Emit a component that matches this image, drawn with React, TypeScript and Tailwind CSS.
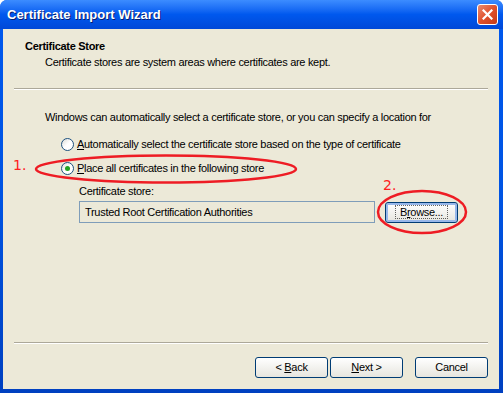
import React from "react";

const font = { fontFamily: '"Liberation Sans", Arial, sans-serif' };

const Radio = ({ checked }: { checked?: boolean }) => (
  <span className="relative inline-block w-[13px] h-[13px] rounded-full border border-[#1c5180] bg-gradient-to-br from-[#dcdcd7] via-white to-white shrink-0">
    {checked && (
      <span className="absolute left-[3px] top-[3px] w-[5px] h-[5px] rounded-full bg-[#21a121]" />
    )}
  </span>
);

const XpButton = ({
  children,
  focused,
  className = "",
}: {
  children: React.ReactNode;
  focused?: boolean;
  className?: string;
}) => (
  <button
    className={`h-[21px] w-[73px] rounded-[3px] border border-[#003c74] bg-gradient-to-b from-white to-[#e6e5de] text-[11px] text-black tracking-[-0.3px] flex items-center justify-center ${
      focused ? "shadow-[inset_0_0_0_2px_#98b8ea]" : ""
    } ${className}`}
    style={font}
  >
    <span>{children}</span>
  </button>
);

export default function App() {
  return (
    <div className="w-[503px] h-[393px] relative" style={font}>
      <div className="w-full h-full flex flex-col rounded-t-[7px] bg-gradient-to-b from-[#0058ee] via-[#0054e3] to-[#0040c0] overflow-hidden">
        {/* title bar */}
        <div className="h-[29px] flex items-center justify-between pl-[7px] pr-[5px] bg-gradient-to-b from-[#3c8cff] via-[#0058ee] to-[#0048d8]">
          <span className="text-white font-bold text-[13px] [text-shadow:1px_1px_0_#0a1e6e]">
            Certificate Import Wizard
          </span>
          <span className="w-[21px] h-[21px] rounded-[3px] border border-white bg-gradient-to-br from-[#e98a6e] via-[#e0502c] to-[#c53a18] flex items-center justify-center">
            <svg width="11" height="11" viewBox="0 0 11 11">
              <path d="M1.5 1.5 L9.5 9.5 M9.5 1.5 L1.5 9.5" stroke="white" strokeWidth="2.2" strokeLinecap="square" />
            </svg>
          </span>
        </div>

        {/* body */}
        <div className="flex-1 mx-[3px] mr-[4px] mb-[4px] bg-[#ece9d8] flex flex-col text-[11px] text-black tracking-[-0.3px]">
          <div className="h-[59px] pt-[11px] pl-[22px]">
            <div className="font-bold leading-[13px]">Certificate Store</div>
            <div className="pl-[20px] pt-[3px] leading-[13px]">
              Certificate stores are system areas where certificates are kept.
            </div>
          </div>
          <div className="mx-[11px] h-[2px] border-t border-[#aca899] border-b border-b-white" />

          <div className="flex-1 flex flex-col pl-[42px] pt-[21px]">
            <div className="leading-[13px]">
              Windows can automatically select a certificate store, or you can specify a location for
            </div>
            <div className="flex items-center gap-[3px] pl-[16px] mt-[13px] h-[14px]">
              <Radio />
              <span>
                <u>A</u>utomatically select the certificate store based on the type of certificate
              </span>
            </div>
            <div className="flex items-center gap-[3px] pl-[16px] mt-[10px] h-[14px]">
              <Radio checked />
              <span>
                <u>P</u>lace all certificates in the following store
              </span>
            </div>
            <div className="pl-[34px] mt-[10px] leading-[13px]">Certificate store:</div>
            <div className="flex items-center pl-[34px] mt-[3px]">
              <div className="w-[296px] h-[22px] border border-[#7f9db9] flex items-center pl-[5px]">
                Trusted Root Certification Authorities
              </div>
              <XpButton focused className="ml-[10px]">
                <span className="px-[4px] border border-dotted border-black/60 leading-[13px]">
                  B<u>r</u>owse...
                </span>
              </XpButton>
            </div>
          </div>

          <div className="mx-[11px] h-[2px] border-t border-[#aca899] border-b border-b-white" />
          <div className="h-[45px] flex items-start justify-end pt-[13px] pr-[11px]">
            <XpButton>
              &lt; <u>B</u>ack
            </XpButton>
            <XpButton className="ml-[2px]">
              <u>N</u>ext &gt;
            </XpButton>
            <XpButton className="ml-[12px]">Cancel</XpButton>
          </div>
        </div>
      </div>

      {/* red annotations */}
      <span className="absolute left-[13px] top-[155px] text-[#ff2020] text-[14px]" style={{ fontFamily: '"DejaVu Sans", sans-serif' }}>
        1.
      </span>
      <span className="absolute left-[383px] top-[175px] text-[#ff2020] text-[14px]" style={{ fontFamily: '"DejaVu Sans", sans-serif' }}>
        2.
      </span>
      <svg className="absolute left-0 top-0 pointer-events-none" width="503" height="393">
        <ellipse cx="166" cy="169" rx="130" ry="13.5" fill="none" stroke="#ee1c24" strokeWidth="2.5" />
        <ellipse cx="422" cy="212" rx="44" ry="21" fill="none" stroke="#ee1c24" strokeWidth="2.5" />
      </svg>
    </div>
  );
}
